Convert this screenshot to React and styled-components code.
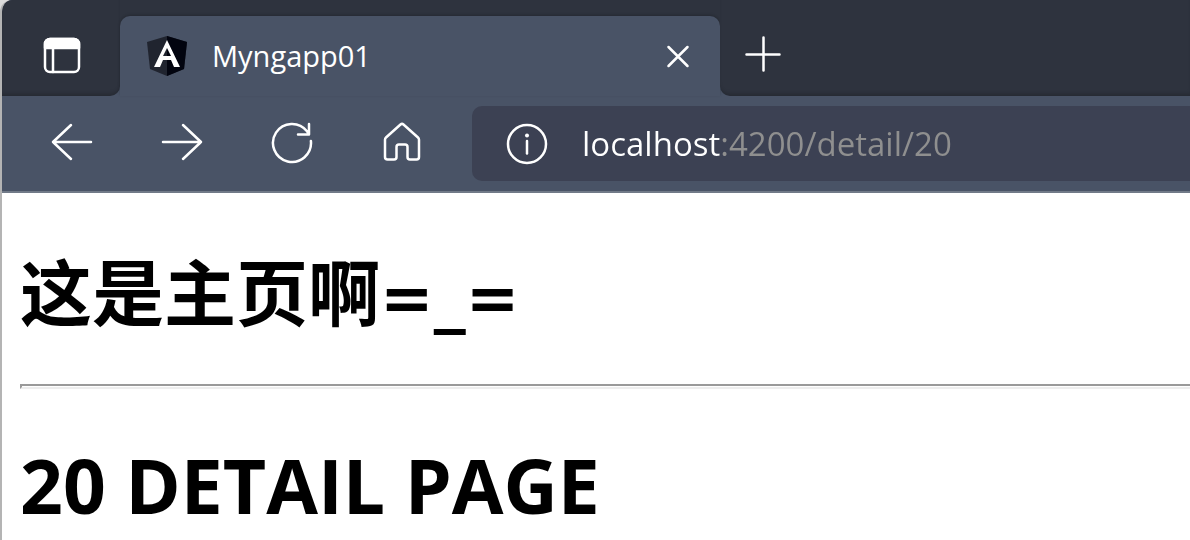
import { useState } from 'react';
import styled, { createGlobalStyle, ThemeProvider } from 'styled-components';

const theme = {
  colors: {
    strip: '#2e333e',
    chrome: '#495366',
    field: '#3c4153',
    divider: '#717a88',
    edge: '#b4b4b4',
    white: '#ffffff',
    black: '#000000',
    muted: '#8f8f8f',
  },
  fonts: {
    ui: '"Open Sans", "Noto Sans", sans-serif',
    page: '"Open Sans", "Noto Sans", sans-serif',
    pageCjk: '"Noto Sans CJK SC", sans-serif',
    emoticon: '"DejaVu Sans", sans-serif',
  },
};

const GlobalStyle = createGlobalStyle`
  * {
    box-sizing: border-box;
  }

  body {
    margin: 0;
    overflow: hidden;
    background-color: #dcdcdc;
  }
`;

const Window = styled.div`
  min-height: 100vh;
  overflow: hidden;
  border-left: 2px solid ${({ theme }) => theme.colors.edge};
  border-top-left-radius: 12px;
  background-color: ${({ theme }) => theme.colors.white};
`;

const TabStrip = styled.div`
  display: flex;
  height: 96px;
  background-color: ${({ theme }) => theme.colors.chrome};
`;

const StripStart = styled.div`
  flex: none;
  width: 118px;
  display: flex;
  align-items: center;
  justify-content: center;
  padding: 16px 0 0 2px;
  border-bottom-right-radius: 10px;
  background-color: ${({ theme }) => theme.colors.strip};
  box-shadow: inset 0 -4px 4px -2px rgba(0, 0, 0, 0.2);
`;

const StripEnd = styled.div`
  flex: 1;
  display: flex;
  align-items: center;
  padding: 12px 0 0 16px;
  border-bottom-left-radius: 10px;
  background-color: ${({ theme }) => theme.colors.strip};
  box-shadow: inset 0 -4px 4px -2px rgba(0, 0, 0, 0.2);
`;

const TabSlot = styled.div`
  flex: 0 1 600px;
  padding-top: 16px;
  background-color: ${({ theme }) => theme.colors.strip};
`;

const Tab = styled.div`
  display: flex;
  align-items: center;
  gap: 24px;
  height: 80px;
  padding: 0 16px 0 26px;
  border-radius: 10px 10px 0 0;
  background-color: ${({ theme }) => theme.colors.chrome};
  box-shadow: 0 -1px 3px rgba(0, 0, 0, 0.2);
`;

const TabTitle = styled.span`
  flex: 1;
  color: ${({ theme }) => theme.colors.white};
  font-family: ${({ theme }) => theme.fonts.ui};
  font-size: 29px;
  line-height: 40px;
`;

const IconButton = styled.button`
  flex: none;
  display: flex;
  align-items: center;
  justify-content: center;
  width: ${({ $width }) => $width}px;
  height: 64px;
  padding: 0;
  border: none;
  background: none;
  color: ${({ theme }) => theme.colors.white};
  cursor: pointer;
`;

const Icon = styled.svg`
  display: block;
  width: 44px;
  height: 44px;
  fill: none;
  stroke: currentColor;
  stroke-width: 2.5;
  stroke-linecap: round;
  stroke-linejoin: round;
`;

const Toolbar = styled.div`
  display: flex;
  align-items: center;
  height: 97px;
  padding: 10px 0 10px 15px;
  border-bottom: 2px solid ${({ theme }) => theme.colors.divider};
  background-color: ${({ theme }) => theme.colors.chrome};
`;

const Nav = styled.nav`
  flex: none;
  display: flex;
  padding-bottom: 4px;
  margin-right: 15px;
`;

const AddressBar = styled.label`
  flex: 1;
  display: flex;
  align-items: center;
  gap: 33px;
  height: 75px;
  padding-left: 33px;
  border-radius: 10px 0 0 10px;
  background-color: ${({ theme }) => theme.colors.field};
  color: ${({ theme }) => theme.colors.white};
`;

// The host part of the address is bright, the rest is dimmed
const AddressInput = styled.input`
  flex: 1;
  min-width: 0;
  padding: 0;
  border: none;
  outline: none;
  background-image: linear-gradient(
    to right,
    ${({ theme }) => theme.colors.white} 138px,
    ${({ theme }) => theme.colors.muted} 138px
  );
  background-clip: text;
  color: transparent;
  caret-color: ${({ theme }) => theme.colors.white};
  font-family: ${({ theme }) => theme.fonts.ui};
  font-size: 33px;
  line-height: 48px;
`;

const Page = styled.main`
  padding: 48px 0 0 18px;
  color: ${({ theme }) => theme.colors.black};
`;

const Heading = styled.h1`
  margin: 0;
  font-family: ${({ theme, $cjk }) => ($cjk ? theme.fonts.pageCjk : theme.fonts.page)};
  font-size: ${({ $cjk }) => ($cjk ? 72 : 75)}px;
  font-weight: bold;
  line-height: 96px;
`;

const Emoticon = styled.span`
  font-family: ${({ theme }) => theme.fonts.emoticon};
  font-size: 64px;
  line-height: 64px;
`;

const Divider = styled.hr`
  height: 5px;
  margin: 47px 0 48px;
  border: 2px solid #9a9a9a;
  border-right: none;
  border-bottom-color: #eeeeee;
`;

function TabActionsIcon() {
  return (
    <Icon viewBox="0 0 44 44">
      <rect x="5" y="5" width="34" height="33" rx="5" />
      <path d="M5 14V10a5 5 0 0 1 5-5h24a5 5 0 0 1 5 5v4z" fill="currentColor" />
      <path d="M13 14v24" />
    </Icon>
  );
}

function AngularLogo() {
  return (
    <svg width="42" height="42" viewBox="0 0 42 42">
      <path d="M21 1 41 7 38 34 21 41 4 34 1 7z" fill="#20242f" />
      <path d="M21 1 41 7 38 34 21 41z" fill="#02040f" />
      <path
        d="M21 5 8 32h6l3-7h8l3 7h6zM21 13l4 8h-8z"
        fill="#ffffff"
        fillRule="evenodd"
      />
    </svg>
  );
}

function App() {
  const [address, setAddress] = useState('localhost:4200/detail/20');

  return (
    <ThemeProvider theme={theme}>
      <GlobalStyle />
      <Window>
        <TabStrip>
          <StripStart>
            <IconButton $width={64} aria-label="Tab actions">
              <TabActionsIcon />
            </IconButton>
          </StripStart>
          <TabSlot>
            <Tab>
              <AngularLogo />
              <TabTitle>Myngapp01</TabTitle>
              <IconButton $width={52} aria-label="Close tab">
                <Icon viewBox="0 0 44 44">
                  <path d="M12.500 13 31.500 32M31.500 13 12.500 32" />
                </Icon>
              </IconButton>
            </Tab>
          </TabSlot>
          <StripEnd>
            <IconButton $width={54} aria-label="New tab">
              <Icon viewBox="0 0 44 44">
                <path d="M22.500 5.500v33M5.500 22.500h33" />
              </Icon>
            </IconButton>
          </StripEnd>
        </TabStrip>

        <Toolbar>
          <Nav>
            <IconButton $width={110} aria-label="Back">
              <Icon viewBox="0 0 44 44">
                <path d="M41 22H3M21 5 3 22l18 17" />
              </Icon>
            </IconButton>
            <IconButton $width={110} aria-label="Forward">
              <Icon viewBox="0 0 44 44">
                <path d="M3 22h38M23 5l18 17-18 17" />
              </Icon>
            </IconButton>
            <IconButton $width={110} aria-label="Refresh">
              <Icon viewBox="0 0 44 44">
                <path d="M40.900 21A19 19 0 1 1 37 11.300L38.500 13.500M39 4V14.500H28" />
              </Icon>
            </IconButton>
            <IconButton $width={110} aria-label="Home">
              <Icon viewBox="0 0 44 44">
                <path d="M20.500 4.500a2.300 2.300 0 0 1 3 0L38 17.500a3 3 0 0 1 1 2.200V37a2.500 2.500 0 0 1-2.500 2.500H30a2.500 2.500 0 0 1-2.500-2.500V27a2.500 2.500 0 0 0-2.500-2.500h-6a2.500 2.500 0 0 0-2.500 2.500v10a2.500 2.500 0 0 1-2.500 2.500H7.500A2.500 2.500 0 0 1 5 37V19.700a3 3 0 0 1 1-2.200z" />
              </Icon>
            </IconButton>
          </Nav>
          <AddressBar htmlFor="address">
            <Icon viewBox="0 0 44 44">
              <circle cx="22" cy="22" r="19" />
              <path d="M22 19v12.500" />
              <circle cx="22" cy="13.500" r="2" fill="currentColor" stroke="none" />
            </Icon>
            <AddressInput
              id="address"
              type="text"
              aria-label="Address"
              spellCheck={false}
              value={address}
              onChange={(e) => setAddress(e.target.value)}
            />
          </AddressBar>
        </Toolbar>

        <Page>
          <Heading $cjk>
            这是主页啊<Emoticon>=_=</Emoticon>
          </Heading>
          <Divider />
          <Heading>20 DETAIL PAGE</Heading>
        </Page>
      </Window>
    </ThemeProvider>
  );
}

export default App;
